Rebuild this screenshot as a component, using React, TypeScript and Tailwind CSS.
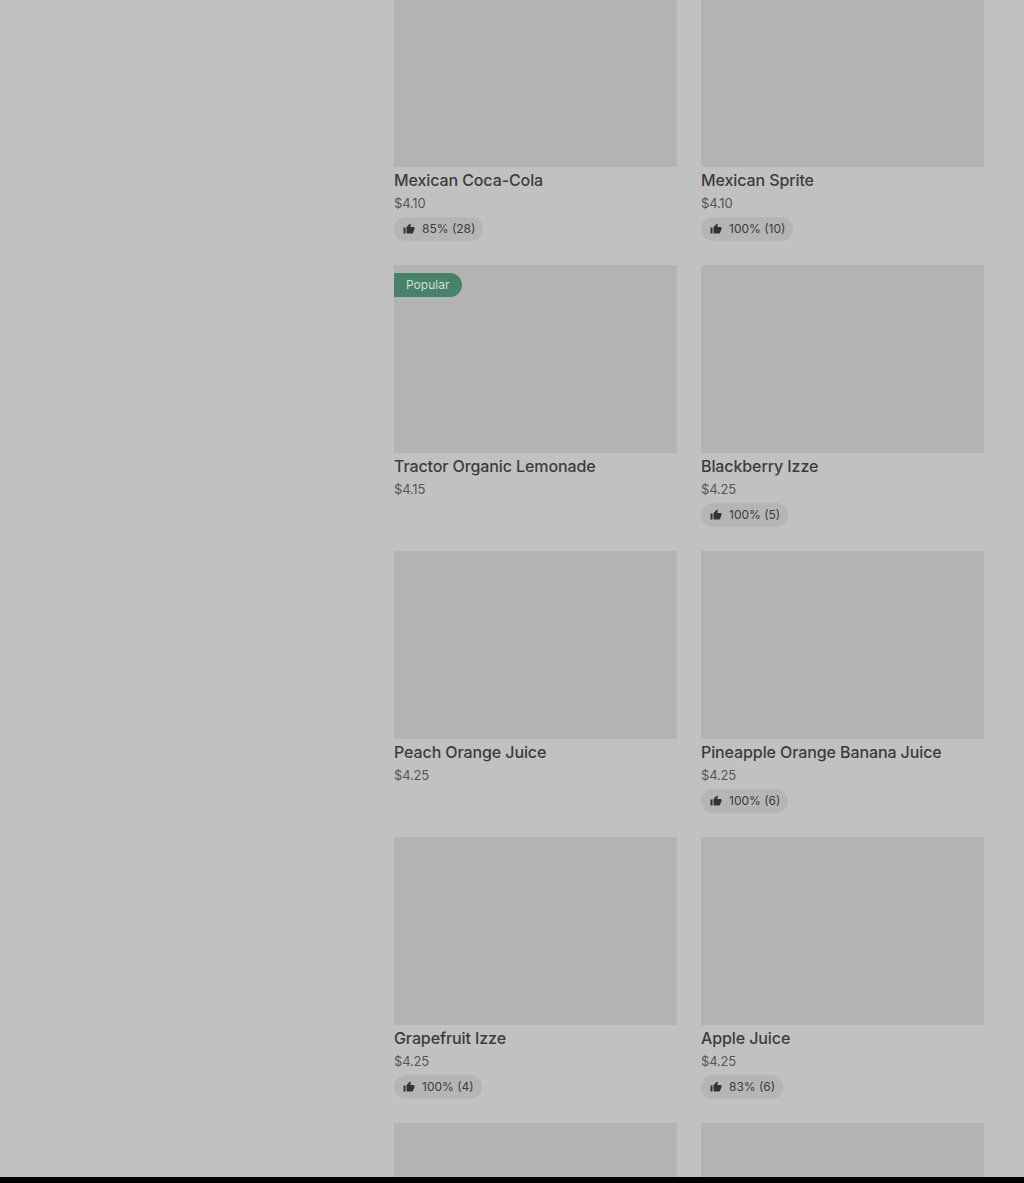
const items = [
  { name: 'Mexican Coca-Cola', price: '$4.10', rating: '85% (28)', imageClass: 'h-[167px]' },
  { name: 'Mexican Sprite', price: '$4.10', rating: '100% (10)', imageClass: 'h-[167px]' },
  { name: 'Tractor Organic Lemonade', price: '$4.15', popular: true },
  { name: 'Blackberry Izze', price: '$4.25', rating: '100% (5)' },
  { name: 'Peach Orange Juice', price: '$4.25' },
  { name: 'Pineapple Orange Banana Juice', price: '$4.25', rating: '100% (6)' },
  { name: 'Grapefruit Izze', price: '$4.25', rating: '100% (4)' },
  { name: 'Apple Juice', price: '$4.25', rating: '83% (6)' },
  { name: '', price: '' },
  { name: '', price: '' },
];

function ThumbIcon() {
  return (
    <svg className="w-3 h-3 text-[#333333]" viewBox="0 0 24 24" fill="currentColor">
      <path d="M1 21h4V9H1v12zm22-11c0-1.1-.9-2-2-2h-6.31l.95-4.57.03-.32c0-.41-.17-.79-.44-1.06L14.17 1 7.59 7.59C7.22 7.95 7 8.45 7 9v10c0 1.1.9 2 2 2h9c.83 0 1.54-.5 1.84-1.22l3.02-7.05c.09-.23.14-.47.14-.73v-2z" />
    </svg>
  );
}

function ItemCard({ name, price, rating, popular, imageClass }: any) {
  return (
    <div className="flex flex-col min-w-0">
      <div className={`relative bg-[#b3b3b3] shrink-0 ${imageClass ?? 'h-[188px]'}`}>
        {popular && (
          <span className="absolute left-0 top-2 h-6 flex items-center pl-3 pr-[13px] bg-[#47836a] text-[#d4dfd9] text-xs rounded-r-full">
            Popular
          </span>
        )}
      </div>
      {name && (
        <>
          <div className="mt-[3px] text-base leading-5 font-medium tracking-[-0.1px] text-[#3c3c3c]">{name}</div>
          <div className="mt-[3px] text-[13px] leading-5 tracking-[-0.2px] text-[#565656]">{price}</div>
          {rating && (
            <div className="mt-1 self-start h-6 flex items-center gap-[7px] pl-[9px] pr-2 rounded-full bg-[#b5b5b5] text-xs text-[#3c3c3c]">
              <ThumbIcon />
              <span>{rating}</span>
            </div>
          )}
        </>
      )}
    </div>
  );
}

export default function App() {
  return (
    <div className="h-[1183px] flex flex-col overflow-hidden bg-[#c1c1c1] font-['Inter',sans-serif]">
      <main className="flex-1 min-h-0 overflow-hidden pl-[394px] pr-10">
        <div className="grid grid-cols-2 gap-x-6 gap-y-6">
          {items.map((item, i) => (
            <ItemCard key={i} {...item} />
          ))}
        </div>
      </main>
      <div className="h-1.5 bg-black shrink-0" />
    </div>
  );
}
